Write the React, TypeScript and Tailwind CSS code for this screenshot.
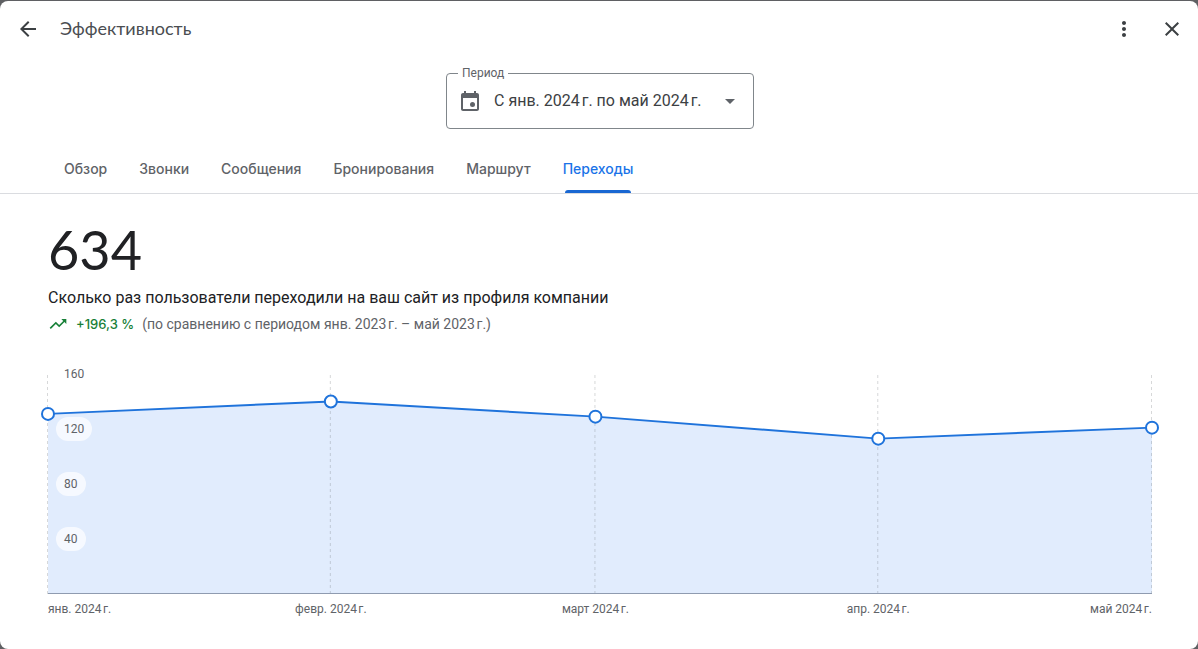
import { useState } from "react";
import {
  MdArrowBack,
  MdArrowDropDown,
  MdClose,
  MdMoreVert,
  MdTrendingUp,
} from "react-icons/md";

const tabs = [
  "Обзор",
  "Звонки",
  "Сообщения",
  "Бронирования",
  "Маршрут",
  "Переходы",
];

// day = days since January 1st
const points = [
  { label: "янв. 2024\u202Fг.", day: 0, value: 131 },
  { label: "февр. 2024\u202Fг.", day: 31, value: 140 },
  { label: "март 2024\u202Fг.", day: 60, value: 129 },
  { label: "апр. 2024\u202Fг.", day: 91, value: 113 },
  { label: "май 2024\u202Fг.", day: 121, value: 121 },
];

const MAX = 160;
const HEIGHT = 220;
const LAST_DAY = 121;

const toX = (day: number) => `${(day / LAST_DAY) * 100}%`;
const toY = (value: number) => HEIGHT - (value / MAX) * HEIGHT;

function CalendarIcon() {
  return (
    <svg viewBox="0 0 24 24" className="h-6 w-6" fill="currentColor" aria-hidden="true">
      <path d="M19 4h-1V2h-2v2H8V2H6v2H5c-1.1 0-2 .9-2 2v14c0 1.1.9 2 2 2h14c1.1 0 2-.9 2-2V6c0-1.1-.9-2-2-2zm0 16H5V9h14v11z" />
      <circle cx="14.5" cy="15.5" r="2.5" />
    </svg>
  );
}

function Chart() {
  const area = points.map((p) => `${p.day},${toY(p.value)}`).join(" ");

  return (
    <div className="relative mt-10">
      <svg className="block h-[248px] w-full overflow-visible" role="img" aria-label="Переходы">
        <svg
          width="100%"
          height={HEIGHT}
          viewBox={`0 0 ${LAST_DAY} ${HEIGHT}`}
          preserveAspectRatio="none"
        >
          <polygon
            points={`0,${HEIGHT} ${area} ${LAST_DAY},${HEIGHT}`}
            className="fill-[#e1ecfd]"
          />
        </svg>
        <g transform="translate(-0.5 0)">
          {points.map((p) => (
            <line
              key={p.day}
              x1={toX(p.day)}
              x2={toX(p.day)}
              y1="1"
              y2={HEIGHT}
              strokeDasharray="3 3"
              className="stroke-[#5f6368]/25"
            />
          ))}
        </g>
        <line
          x1="0"
          x2="100%"
          y1={HEIGHT - 0.5}
          y2={HEIGHT - 0.5}
          className="stroke-[#8f9bb0]"
        />
        {points.slice(1).map((p, i) => (
          <line
            key={p.day}
            x1={toX(points[i].day)}
            y1={toY(points[i].value)}
            x2={toX(p.day)}
            y2={toY(p.value)}
            strokeWidth="2"
            className="stroke-[#1f73db]"
          />
        ))}
        {points.map((p) => (
          <circle
            key={p.day}
            cx={toX(p.day)}
            cy={toY(p.value)}
            r="6"
            strokeWidth="2"
            className="fill-white stroke-[#1f73db]"
          />
        ))}
        {points.map((p, i) => (
          <text
            key={p.day}
            x={toX(p.day)}
            y="239"
            textAnchor={i === 0 ? "start" : i === points.length - 1 ? "end" : "middle"}
            className="fill-[#5f6368] text-xs"
          >
            {p.label}
          </text>
        ))}
      </svg>

      {/* y axis, one row for every 40 */}
      <div className="absolute -top-3 left-2 flex flex-col items-start gap-[31px] text-xs text-[#5f6368]">
        {[160, 120, 80, 40].map((n) => (
          <span key={n} className="rounded-full bg-white/70 px-2 leading-6">
            {n}
          </span>
        ))}
      </div>
    </div>
  );
}

export default function App() {
  const [active, setActive] = useState("Переходы");

  return (
    <div className="flex min-h-screen flex-col bg-[#5f6063] pt-px font-[Roboto,sans-serif]">
      <main className="grow rounded-lg bg-white">
        <header className="flex h-14 items-center px-4 text-[#3c4043]">
          <button aria-label="Назад">
            <MdArrowBack size={24} />
          </button>
          <h1 className="ml-5 grow pb-0.5 font-[Lato,sans-serif] text-lg leading-6 text-[#4a4d51]">
            Эффективность
          </h1>
          <button aria-label="Ещё" className="mr-6">
            <MdMoreVert size={24} />
          </button>
          <button aria-label="Закрыть" className="-mr-0.5">
            <MdClose size={24} />
          </button>
        </header>

        <div className="mt-4 flex justify-center pr-[46px] pl-12">
          <div className="relative w-[308px] text-[#5f6368]">
            <label
              htmlFor="period"
              className="absolute -top-2 left-3 bg-white px-1 text-xs leading-4"
            >
              Период
            </label>
            <select
              id="period"
              className="h-14 w-full appearance-none rounded border border-[#80868b] bg-transparent pl-[47px] text-base text-[#3c4043]"
            >
              <option>С янв. 2024{"\u202F"}г. по май 2024{"\u202F"}г.</option>
            </select>
            <span className="pointer-events-none absolute inset-y-0 left-3 flex items-center">
              <CalendarIcon />
            </span>
            <span className="pointer-events-none absolute inset-y-0 right-3 flex items-center">
              <MdArrowDropDown size={24} />
            </span>
          </div>
        </div>

        <nav
          role="tablist"
          className="mt-4 flex h-[49px] border-b border-[#dadce0] px-12 font-[Inter,sans-serif] text-sm font-medium"
        >
          {tabs.map((tab) => (
            <button
              key={tab}
              role="tab"
              aria-selected={tab === active}
              onClick={() => setActive(tab)}
              className={
                tab === active
                  ? "relative px-4 text-[#1a73e8]"
                  : "relative px-4 text-[#5f6368]"
              }
            >
              {tab}
              {tab === active && (
                <span className="absolute inset-x-[18px] bottom-0 h-[3px] rounded-t-full bg-[#1967d2]" />
              )}
            </button>
          ))}
        </nav>

        <section className="pt-7 pr-[46px] pl-12">
          <p className="font-[Lato,sans-serif] text-[54px] leading-[56px] text-[#202124]">634</p>
          <h2 className="mt-2 text-base text-[#202124]">
            Сколько раз пользователи переходили на ваш сайт из профиля компании
          </h2>
          <div className="mt-1 flex items-center text-sm text-[#5f6368]">
            <MdTrendingUp size={20} className="text-[#188038]" />
            <span className="ml-2 font-[Inter,sans-serif] text-[13px] font-medium text-[#188038]">
              +196,3 %
            </span>
            <span className="ml-2">
              (по сравнению с периодом янв. 2023{"\u202F"}г. – май 2023{"\u202F"}г.)
            </span>
          </div>
          <Chart />
        </section>
      </main>
    </div>
  );
}
